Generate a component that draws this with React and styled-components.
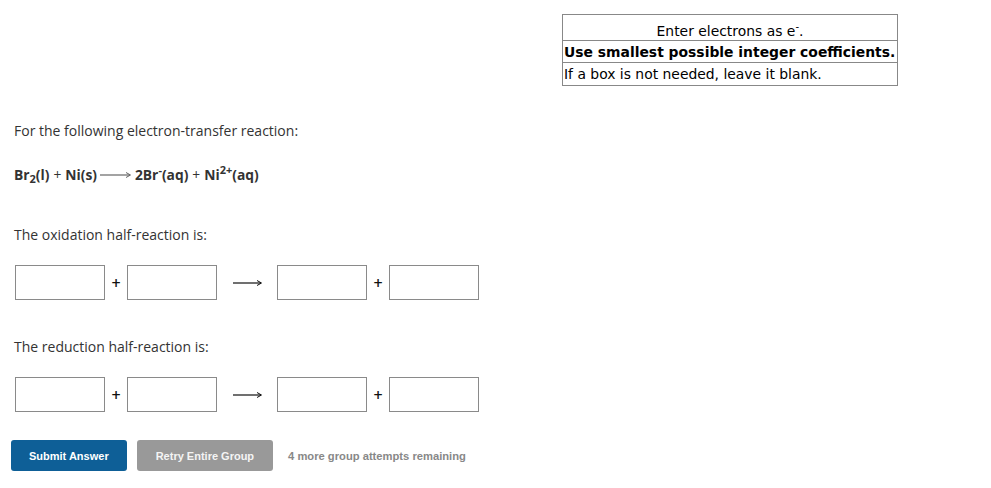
import React from 'react';
import styled, { createGlobalStyle } from 'styled-components';

const GlobalStyle = createGlobalStyle`
  body {
    margin: 0;
    background: #fff;
    font-family: "Open Sans", "Liberation Sans", sans-serif;
    color: #333;
  }
`;

const Page = styled.div`
  width: 991px;
  padding: 14px 0 0 14px;
  box-sizing: border-box;
`;

const TopBar = styled.div`
  display: flex;
  justify-content: flex-end;
  width: 884px;
`;

const Hints = styled.table`
  border-collapse: collapse;
  table-layout: fixed;
  width: 336px;
  font-family: "DejaVu Sans", Verdana, sans-serif;
  font-size: 13.9px;
  color: #000;
`;

const HintCell = styled.td`
  border: 1px solid #888;
  padding: ${p => p.$pad};
  text-align: ${p => (p.$center ? 'center' : 'left')};
  font-weight: ${p => (p.$bold ? 'bold' : 'normal')};
  line-height: 18px;
  white-space: nowrap;
  overflow: visible;
`;

const Prompt = styled.p`
  margin: ${p => p.$top}px 0 0;
  font-size: 14px;
  line-height: 19px;
  color: #333;
`;

const Equation = styled.div`
  margin-top: 25px;
  font-size: 13.8px;
  font-weight: bold;
  line-height: 20px;
  color: #333;
  white-space: nowrap;
`;

const Sub = styled.sub`
  font-size: 11px;
  vertical-align: -3px;
  line-height: 0;
`;

const Sup = styled.sup`
  font-size: ${p => p.$size || 11}px;
  vertical-align: 6px;
  line-height: 0;
`;

const Op = styled.span`
  font-weight: normal;
  margin: 0 4px;
`;

const ArrowSvg = styled.svg`
  display: inline-block;
  vertical-align: ${p => p.$valign}px;
  margin: ${p => p.$margin};
`;

const HalfRow = styled.div`
  display: flex;
  align-items: center;
  margin-top: ${p => p.$top}px;
  margin-left: 1px;
  height: 35px;
`;

const Box = styled.input`
  width: 90px;
  height: 35px;
  box-sizing: border-box;
  border: 1px solid #8a8a8a;
  padding: 0 4px;
  margin: 0;
  font-family: "Open Sans", sans-serif;
  font-size: 14px;
  outline: none;
`;

const Plus = styled.span`
  width: 22px;
  text-align: center;
  font-size: 16px;
  color: #111;
  font-weight: 600;
`;

const ArrowSlot = styled.span`
  width: 60px;
  display: flex;
  justify-content: center;
`;

const Actions = styled.div`
  display: flex;
  align-items: center;
  margin: 28px 0 0 -3px;
  gap: 10px;
`;

const Button = styled.button`
  height: 31px;
  padding: 0 ${p => p.$pad}px;
  border: none;
  border-radius: 3px;
  background: ${p => p.$bg};
  color: ${p => p.$fg};
  font-family: "Liberation Sans", Arial, sans-serif;
  font-weight: bold;
  font-size: 11px;
  cursor: pointer;
`;

const Remaining = styled.span`
  margin-left: 5px;
  font-family: "Liberation Sans", Arial, sans-serif;
  font-weight: bold;
  font-size: 11.2px;
  color: #888;
`;

const LongArrow = ({ width, color, valign = 0, margin = '0' }) => (
  <ArrowSvg width={width} height="8" viewBox={`0 0 ${width} 8`} $valign={valign} $margin={margin}>
    <line x1="0" y1="4" x2={width - 1} y2="4" stroke={color} strokeWidth="1.2" />
    <path d={`M${width - 5} 1.5 L${width - 0.5} 4 L${width - 5} 6.5`} fill="none" stroke={color} strokeWidth="1" />
  </ArrowSvg>
);

const HalfReaction = ({ top }) => (
  <HalfRow $top={top}>
    <Box />
    <Plus>+</Plus>
    <Box />
    <ArrowSlot>
      <LongArrow width={29} color="#111" />
    </ArrowSlot>
    <Box />
    <Plus>+</Plus>
    <Box />
  </HalfRow>
);

export default function App() {
  return (
    <>
      <GlobalStyle />
      <Page>
        <TopBar>
          <Hints>
            <tbody>
              <tr>
                <HintCell $center $pad="7px 1px 0">Enter electrons as e<Sup $size={10}>-</Sup>.</HintCell>
              </tr>
              <tr>
                <HintCell $bold $pad="2px 1px 1px">Use smallest possible integer coefficients.</HintCell>
              </tr>
              <tr>
                <HintCell $pad="2px 1px 2px">If a box is not needed, leave it blank.</HintCell>
              </tr>
            </tbody>
          </Hints>
        </TopBar>

        <Prompt $top={35}>For the following electron-transfer reaction:</Prompt>

        <Equation>
          Br<Sub>2</Sub>(l)<Op>+</Op>Ni(s)
          <LongArrow width={31} color="#666" valign={1} margin="0 4px 0 3px" />
          2Br<Sup>-</Sup>(aq)<Op>+</Op>Ni<Sup>2+</Sup>(aq)
        </Equation>

        <Prompt $top={40}>The oxidation half-reaction is:</Prompt>
        <HalfReaction top={21} />

        <Prompt $top={37}>The reduction half-reaction is:</Prompt>
        <HalfReaction top={21} />

        <Actions>
          <Button $bg="#0e5f97" $fg="#fff" $pad={18}>Submit Answer</Button>
          <Button $bg="#999" $fg="#f4f4f4" $pad={19}>Retry Entire Group</Button>
          <Remaining>4 more group attempts remaining</Remaining>
        </Actions>
      </Page>
    </>
  );
}
